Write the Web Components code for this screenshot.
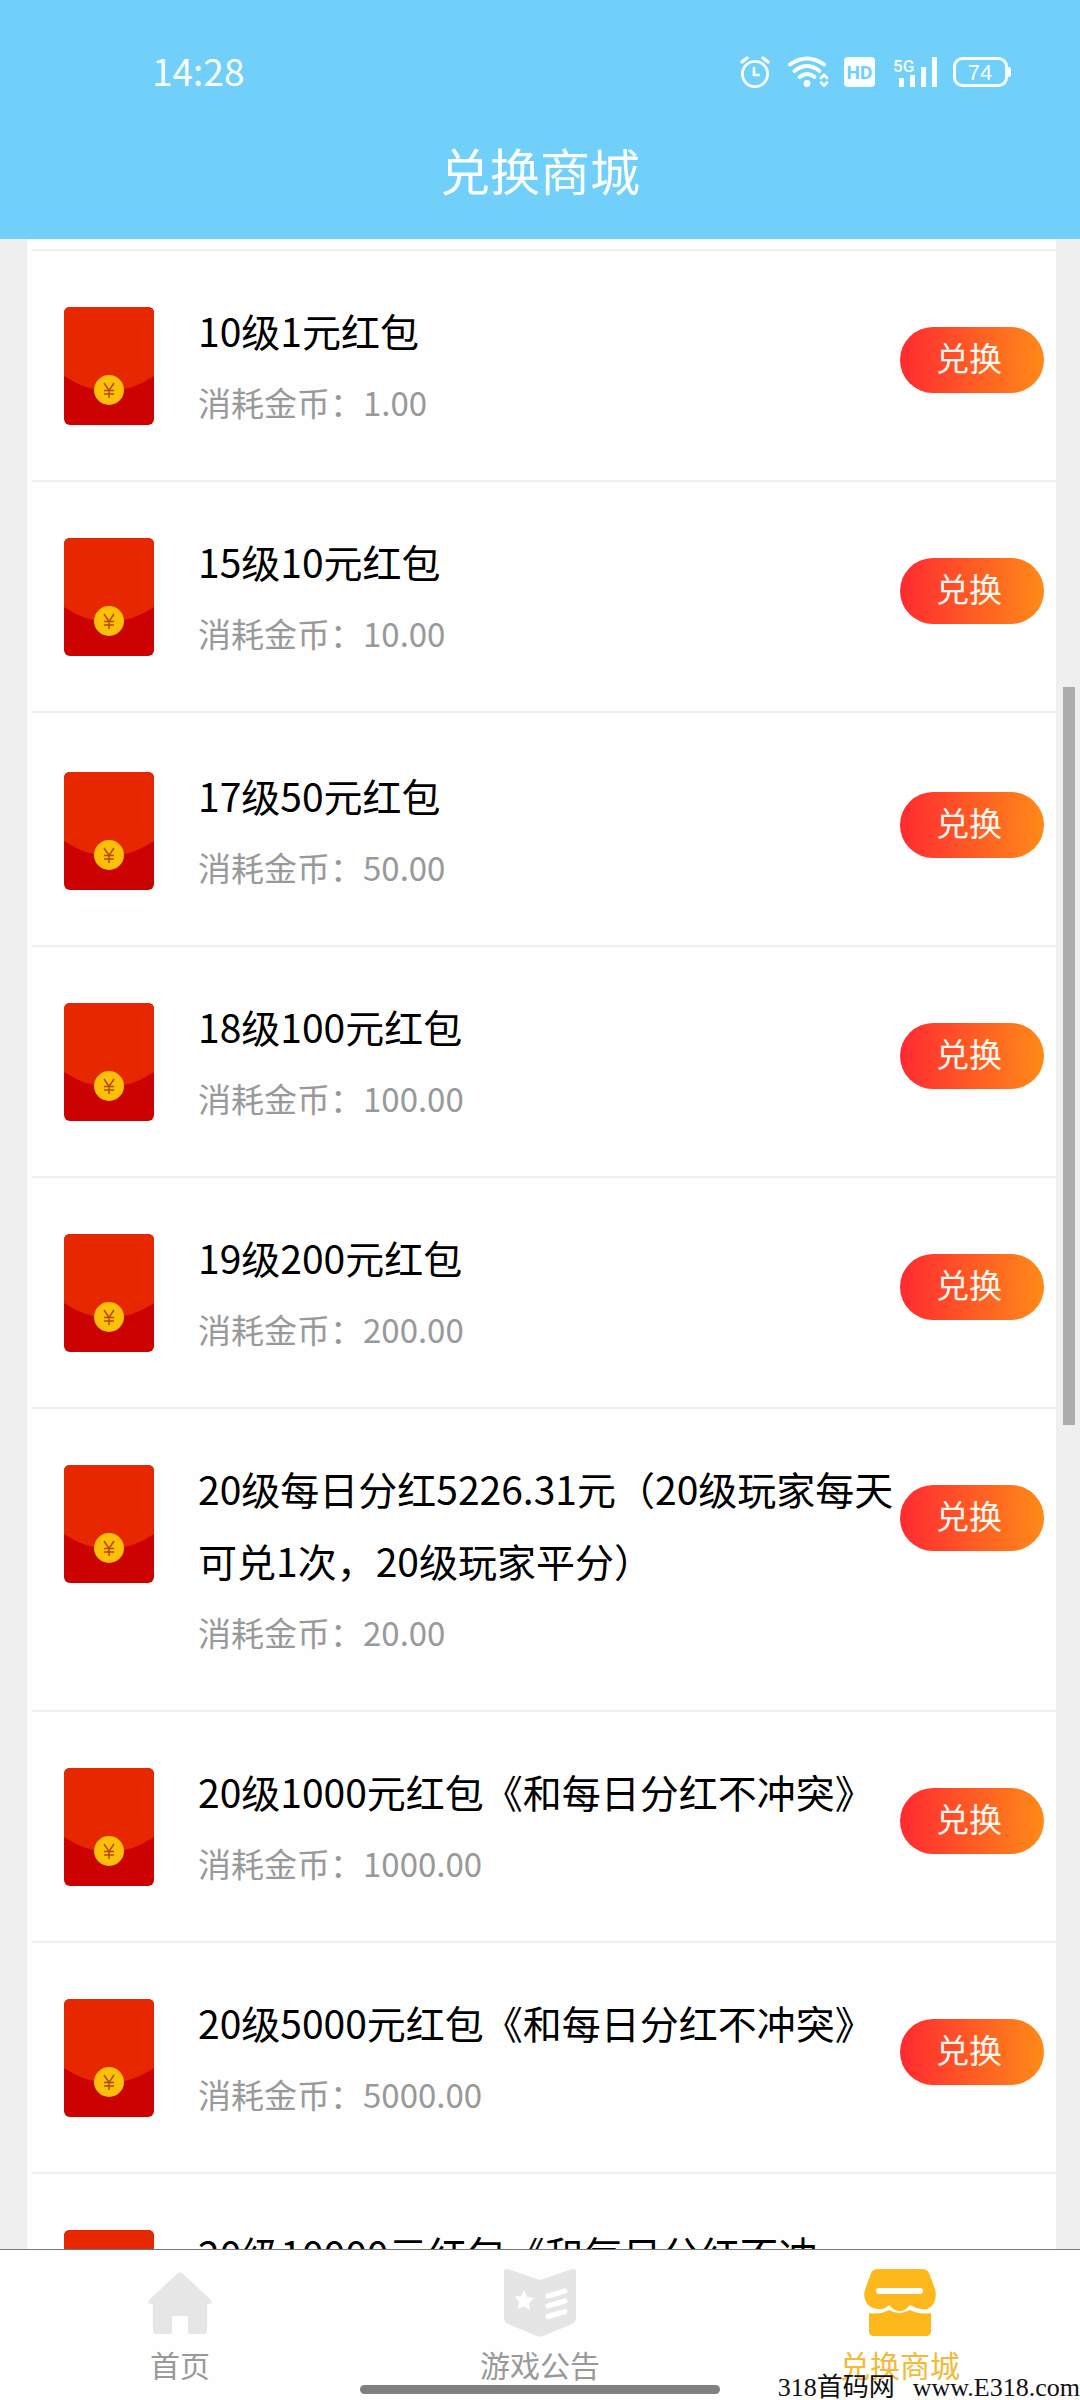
<!DOCTYPE html>
<html lang="zh-CN">
<head>
<meta charset="utf-8">
<meta name="viewport" content="width=device-width, initial-scale=1">
<title>兑换商城</title>
<style>
  html, body { height: 100%; margin: 0; }
  body { font-family: "Noto Sans CJK SC", sans-serif; background: #efeff0; overflow: hidden; }
</style>
</head>
<body>
<mall-app></mall-app>

<template id="t-app">
  <style>
    :host { display: flex; flex-direction: column; height: 100vh; position: relative; }
    main { flex: 1; min-height: 0; overflow: hidden; position: relative; padding: 0 24px 0 27px; }
    .panel { background: #fefefe; padding: 10px 0 0 5px; display: flex; flex-direction: column; gap: 3px; }
    .group { border-top: 2px solid #eeeeed; }
    .group + .group { border-top: 0; }
  </style>
  <app-header>兑换商城</app-header>
  <main>
    <div class="panel">
      <div class="group">
        <reward-row cost="1.00">10级1元红包</reward-row>
        <reward-row cost="10.00">15级10元红包</reward-row>
      </div>
      <div class="group">
        <reward-row cost="50.00">17级50元红包</reward-row>
        <reward-row cost="100.00">18级100元红包</reward-row>
        <reward-row cost="200.00">19级200元红包</reward-row>
        <reward-row cost="20.00">20级每日分红5226.31元（20级玩家每天可兑1次，20级玩家平分）</reward-row>
        <reward-row cost="1000.00">20级1000元红包《和每日分红不冲突》</reward-row>
        <reward-row cost="5000.00">20级5000元红包《和每日分红不冲突》</reward-row>
        <reward-row cost="10000.00">20级10000元红包《和每日分红不冲突》</reward-row>
      </div>
    </div>
    <scroll-thumb></scroll-thumb>
  </main>
  <tab-bar></tab-bar>
  <site-mark><span>318首码网</span><span>www.E318.com</span></site-mark>
</template>

<template id="t-header">
  <style>
    :host { display: block; background: #70d0fa; color: #fafeff; height: 239px; }
    .status { display: flex; align-items: center; justify-content: space-between; padding: 42px 68px 0 152px; }
    time { font-size: 37px; line-height: 56px; padding-bottom: 4px; }
    .icons { display: flex; align-items: center; gap: 15px; }
    svg { display: block; }
    .wide { margin-left: 2px; }
    h1 { margin: 0; font-size: 50px; line-height: 80px; padding-top: 27px; font-weight: 400; text-align: center; }
  </style>
  <div class="status">
    <time>14:28</time>
    <div class="icons">
      <svg width="30" height="32" viewBox="0 0 30 32" fill="none" stroke="#fafeff">
        <circle cx="15" cy="18" r="12.6" stroke-width="2.8"/>
        <path d="M14 11v8h6" stroke-width="2.6"/>
        <path d="M2 6 7 2M28 6 23 2" stroke-width="3.4" stroke-linecap="round"/>
      </svg>
      <svg class="wide" width="42" height="32" viewBox="0 0 42 32" fill="none" stroke="#fafeff" stroke-width="3.8" stroke-linecap="round">
        <path d="M3 8.500Q20-3.500 37 8.500M7.500 15Q20 5 32.500 15M12.500 21Q20 15 27.500 21"/>
        <circle cx="20" cy="27.500" r="3.400" fill="#fafeff" stroke="none"/>
        <path d="M34 22 37 19 40 22M34 26.500 37 29.500 40 26.500" stroke-width="2.800"/>
      </svg>
      <svg width="31" height="32" viewBox="0 0 31 32">
        <rect x="0" y="1" width="31" height="30" rx="4" fill="#fafeff"/>
        <text x="15.500" y="23" text-anchor="middle" font-family="Roboto, sans-serif" font-size="19" font-weight="700" fill="#70d0fa">HD</text>
      </svg>
      <svg class="wide" width="46" height="32" viewBox="0 0 46 32" fill="#fafeff">
        <text x="1" y="16" font-family="Roboto, sans-serif" font-size="17" font-weight="500">5G</text>
        <path d="M7 22h5v9H7zM18 19h5v12h-5zM29 11h5v20h-5zM40 1h5v30h-5z"/>
      </svg>
      <svg width="59" height="32" viewBox="0 0 59 32" fill="#fafeff">
        <rect x="1.500" y="2.500" width="52" height="27" rx="8" fill="none" stroke="#fafeff" stroke-width="3"/>
        <path d="M55 11h1q2 0 2 2v6q0 2-2 2h-1z"/>
        <text x="27" y="24" text-anchor="middle" font-family="'Liberation Sans', sans-serif" font-size="22">74</text>
      </svg>
    </div>
  </div>
  <h1><slot></slot></h1>
</template>

<template id="t-row">
  <style>
    :host { display: flex; align-items: flex-start; padding: 43px 12px 42px 32px; border-bottom: 2px solid #eeeeed; }
    svg { display: block; flex: none; margin: 13px 44px 0 0; }
    .text { flex: 1; min-width: 0; line-height: 72px; text-spacing-trim: space-all; }
    h2 { margin: 0; font-size: 39px; font-weight: 400; line-height: 72px; color: #000; }
    p { margin: 0; font-size: 33px; color: #999; }
    button { flex: none; margin: 33px 0 0 6px; width: 144px; height: 66px; border: 0; border-radius: 33px;
      padding: 0 6px 6px 0; font: 33px/60px "Noto Sans CJK SC", sans-serif; color: #fff8f0;
      background: linear-gradient(90deg, #ff2a31, #ff8a18); }
  </style>
  <svg width="90" height="118" viewBox="0 0 90 118" aria-hidden="true">
    <rect width="90" height="118" rx="6" fill="#cb0200"/>
    <path d="M0 69V6Q0 0 6 0H84Q90 0 90 6V69Q45 99 0 69Z" fill="#e62700"/>
    <circle cx="45" cy="83" r="15" fill="#fdc009"/>
    <path d="M40 76 45 83.500 50 76M45 83.500V91M40 83.500H50M40 87H50" fill="none" stroke="#b4470c" stroke-width="1.500"/>
  </svg>
  <div class="text">
    <h2><slot></slot></h2>
    <p>消耗金币：<span></span></p>
  </div>
  <button type="button">兑换</button>
</template>

<template id="t-thumb">
  <style>
    :host { position: absolute; right: 5px; top: 448px; height: 738px; width: 12px; background: #aeacab; }
  </style>
</template>

<template id="t-tabs">
  <style>
    :host { display: block; position: relative; background: #fefefe; border-top: 1px solid #777; height: 150px; }
    nav { display: flex; }
    a { flex: 1; display: flex; flex-direction: column; align-items: center; padding-top: 18px; gap: 4px;
      text-decoration: none; color: #999; font-size: 30px; line-height: 44px; }
    a[aria-current] { color: #f0bb38; }
    svg { display: block; }
    .pill { position: absolute; left: 50%; bottom: 6px; width: 360px; height: 9px; margin-left: -180px; border-radius: 5px; background: #808080; }
  </style>
  <nav>
    <a href="#home">
      <svg width="72" height="70" viewBox="0 0 72 70" fill="#e6e6e7">
        <path d="M33 6Q36 3 39 6L67 32Q69 36 65 36H63V63Q63 66 60 66H46Q44 66 44 64V48H28V64Q28 66 26 66H12Q9 66 9 63V36H7Q3 36 5 32Z"/>
      </svg>
      <span>首页</span>
    </a>
    <a href="#notice">
      <svg width="72" height="70" viewBox="0 0 72 70">
        <path d="M0 3Q0 0 4 1L36 12 68 1Q72 0 72 3V50Q72 54 68 56L39 68Q36 69 33 68L4 56Q0 54 0 50Z" fill="#e5e5e5"/>
        <path d="M20 22 23 29 30 30 25 35 26 42 20 38.500 14 41 15 34 11 28.500 17 28Z" fill="#fff"/>
        <path d="M44 28 61 23M44 38 61 33M44 48.500 61 43.500" stroke="#fff" stroke-width="5" stroke-linecap="round"/>
      </svg>
      <span>游戏公告</span>
    </a>
    <a href="#mall" aria-current="page">
      <svg width="72" height="70" viewBox="0 0 72 70" fill="#fdb91c">
        <path d="M14 1H58Q63 1 65 5L71 21Q73 29 70 35 65 43 57 41 51 40 46 37 41 43 36 43 30 43 25 37 21 42 14 41 5 40 2 34-1 28 1 22L7 5Q9 1 14 1Z"/>
        <path d="M5 45Q16 47 25 42 35 48 46 42 56 47 67 45V63Q67 68 62 68H10Q5 68 5 63Z"/>
        <path d="M15 23H56" stroke="#fff" stroke-width="6" stroke-linecap="round"/>
      </svg>
      <span>兑换商城</span>
    </a>
  </nav>
  <div class="pill"></div>
</template>

<template id="t-mark">
  <style>
    :host { position: absolute; right: 0; bottom: 0; display: flex; gap: 18px; color: #111; white-space: nowrap;
      font: 26px/24px "Liberation Serif", "Noto Sans CJK SC", serif; }
  </style>
  <slot></slot>
</template>

<script>
  class BaseElement extends HTMLElement {
    constructor() {
      super();
      const tpl = document.getElementById(this.constructor.template);
      this.attachShadow({ mode: 'open' }).append(tpl.content.cloneNode(true));
    }
  }
  customElements.define('app-header', class extends BaseElement { static template = 't-header'; });
  customElements.define('reward-row', class extends BaseElement {
    static template = 't-row';
    static observedAttributes = ['cost'];
    attributeChangedCallback(name, prev, value) {
      this.shadowRoot.querySelector('p span').textContent = value;
    }
  });
  customElements.define('scroll-thumb', class extends BaseElement { static template = 't-thumb'; });
  customElements.define('tab-bar', class extends BaseElement { static template = 't-tabs'; });
  customElements.define('site-mark', class extends BaseElement { static template = 't-mark'; });
  customElements.define('mall-app', class extends BaseElement { static template = 't-app'; });
</script>
</body>
</html>
